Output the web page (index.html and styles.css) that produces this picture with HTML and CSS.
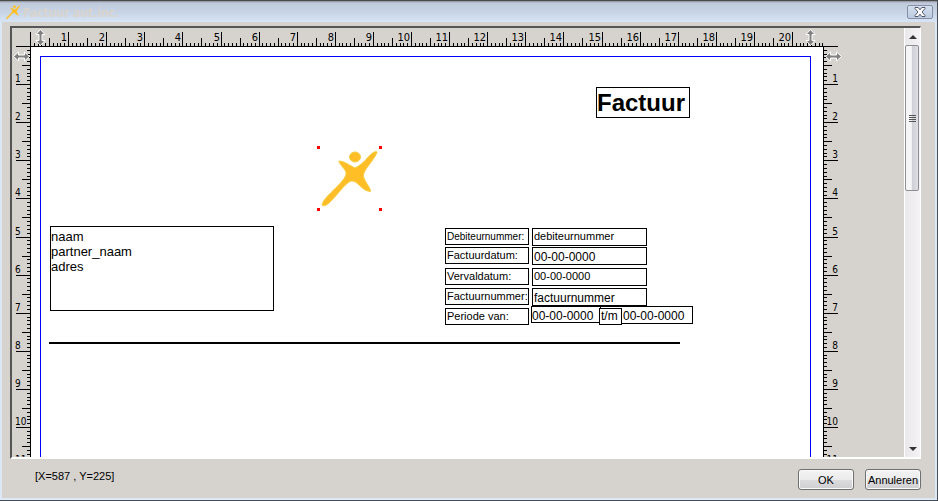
FILE: index.html
```html
<!DOCTYPE html>
<html lang="nl">
<head>
<meta charset="utf-8">
<title>Factuur aut.inc.</title>
<link rel="stylesheet" href="styles.css">
</head>
<body>
<div class="window">
  <header class="titlebar">
    <svg class="app-icon" viewBox="0 0 64 64" aria-hidden="true"><use href="#figure"/></svg>
    <h1 class="title">Factuur aut.inc.</h1>
    <button class="close" type="button" aria-label="Sluiten">
      <svg width="12" height="10" viewBox="0 0 12 10" aria-hidden="true">
        <path d="M1 .5h3.200L6 2.800 7.800.5H11v1L8 5l3 3.500v1H7.800L6 7.200 4.200 9.500H1v-1L4 5 1 1.500z" fill="#fff" stroke="#53566a"/>
      </svg>
    </button>
  </header>

  <main class="designer">
    <svg class="ruler ruler-top" id="ruler-top" aria-hidden="true"></svg>
    <svg class="ruler ruler-left" id="ruler-left" aria-hidden="true"></svg>
    <section class="sheet">
      <div class="margins"></div>
      <div class="field heading">Factuur</div>
      <div class="picture">
        <svg viewBox="0 0 64 64" aria-hidden="true">
          <g id="figure" fill="#ffbe26" stroke="#f5cf45" stroke-width="1">
            <ellipse cx="38" cy="11" rx="5.500" ry="5"/>
            <path d="M59.500 5.500C56 5.500 52 10 49 13.500C46 17 42 20 38 22C34 20 27 15 22 15C21.500 17 27 22 28.500 25C30 28 28 31 26 34C20 42 6 52 5 59C6.500 61 10 59 12 57C19 51 27 38 34 35C41 34 44 45 53.500 45.500C54 42 47 35 46.500 30C46 24 56 16 60 6.500Z"/>
          </g>
        </svg>
        <i class="handle nw"></i><i class="handle ne"></i><i class="handle sw"></i><i class="handle se"></i>
      </div>
      <div class="field address">naam<br>partner_naam<br>adres</div>

      <div class="field tight label row1">Debiteurnummer:</div>
      <div class="field small value row1">debiteurnummer</div>
      <div class="field small label row2">Factuurdatum:</div>
      <div class="field value low row2">00-00-0000</div>
      <div class="field small label row3">Vervaldatum:</div>
      <div class="field small value row3">00-00-0000</div>
      <div class="field small label row4">Factuurnummer:</div>
      <div class="field value low row4">factuurnummer</div>
      <div class="field small label row5">Periode van:</div>
      <div class="field period-end">00-00-0000</div>
      <div class="field period-start">00-00-0000</div>
      <div class="field period-sep">t/m</div>
      <div class="rule"></div>
    </section>
    <svg class="ruler ruler-right" id="ruler-right" aria-hidden="true"></svg>
    <div class="scrollbar">
      <button class="scroll-step" type="button" aria-label="Omhoog">
        <svg width="8" height="4" viewBox="0 0 8 4" aria-hidden="true"><path d="M0 4L4 0l4 4z" fill="#333"/></svg>
      </button>
      <div class="track"><div class="thumb"><i></i><i></i><i></i><i></i></div></div>
      <button class="scroll-step" type="button" aria-label="Omlaag">
        <svg width="8" height="4" viewBox="0 0 8 4" aria-hidden="true"><path d="M0 0h8L4 4z" fill="#333"/></svg>
      </button>
    </div>
  </main>

  <footer class="footer">
    <span class="position">[X=587 , Y=225]</span>
    <button class="action" type="button">OK</button>
    <button class="action" type="button">Annuleren</button>
  </footer>
</div>
<script src="rulers.js"></script>
</body>
</html>
```
FILE: styles.css
```css
* { box-sizing: border-box; }

body {
  margin: 0;
  font-family: "Liberation Sans", Arial, sans-serif;
  font-size: 12px;
  color: #000;
}

.window {
  display: flex;
  flex-direction: column;
  height: 100vh;
  background: #d6d3ce;
  border-top: 1px solid #4a4a4a;
  border-right: 1px solid #4a4f55;
  border-bottom: 1px solid #4a4f55;
  box-shadow: inset 2px 0 #dce8f6, inset -2px -2px #dce8f6;
  overflow: hidden;
}

.titlebar {
  display: flex;
  align-items: center;
  flex: none;
  height: 21px;
  padding: 0 4px 0 5px;
  background: linear-gradient(#8b9099 0, #c0cadb 2px, #c8d5e7 12px, #d7e5f6 100%);
}

.app-icon { width: 16px; height: 16px; }

.title {
  flex: 1;
  margin: 3px 0 0 2px;
  font: bold 12px "DejaVu Sans Condensed", "DejaVu Sans", sans-serif;
  color: #d8d4cd;
}

.close {
  display: flex;
  align-items: center;
  justify-content: center;
  width: 26px;
  height: 14px;
  padding: 0;
  border: 1px solid #8790a8;
  border-radius: 2px;
  background: linear-gradient(#d3dfed, #bccbe0);
}

.designer {
  flex: 1;
  min-height: 0;
  display: grid;
  grid-template-columns: 19px 792px 1fr 16px;
  grid-template-rows: 19px minmax(0, 1fr);
  margin: 4px 16px 0 10px;
  border: solid;
  border-width: 2px 1px 2px 2px;
  border-color: #555 #fff #fff #555;
  overflow: hidden;
}

.ruler {
  display: block;
  width: 100%;
  height: 100%;
  min-height: 0;
  font: 11px "DejaVu Sans Condensed", "DejaVu Sans", sans-serif;
}

.ruler-top { grid-area: 1 / 1 / 2 / 4; }
.ruler-left { grid-area: 2 / 1; font-size: 10px; }
.ruler-right { grid-area: 2 / 3; font-size: 10px; }

.sheet {
  grid-area: 2 / 2;
  position: relative;
  background: #fff;
  overflow: hidden;
}

.margins {
  height: 1080px;
  margin: 9px 12px 0 9px;
  border: 1px solid #00f;
}

/* Report items sit at free positions on the sheet. */
.field {
  position: absolute;
  border: 1px solid #000;
  padding-left: 1px;
  line-height: 15px;
  white-space: nowrap;
}

.small { font-size: 11px; }
.tight { font-size: 10px; }

.heading {
  left: 565px;
  top: 40px;
  width: 94px;
  height: 31px;
  padding-left: 0;
  font-size: 24px;
  font-weight: bold;
  line-height: 30px;
}

.address {
  left: 19px;
  top: 179px;
  width: 224px;
  height: 85px;
  padding-top: 2px;
  padding-left: 0;
  font-size: 13px;
}

.label { left: 414px; width: 84px; height: 17px; }
.value { left: 501px; width: 115px; height: 18px; }
.low { line-height: 18px; }
.row1 { top: 181px; }
.row2 { top: 200px; }
.row3 { top: 221px; }
.row4 { top: 241px; }
.row5 { top: 261px; }

.period-start { left: 500px; top: 259px; width: 70px; height: 17px; line-height: 18px; padding-left: 0; }
.period-end { left: 569px; top: 259px; width: 93px; height: 18px; line-height: 18px; padding-left: 22px; }
.period-sep { left: 568px; top: 261px; width: 23px; height: 17px; background: #fff; }

.rule {
  position: absolute;
  left: 18px;
  top: 295px;
  width: 631px;
  height: 2px;
  background: #000;
}

.picture {
  position: absolute;
  left: 286px;
  top: 99px;
  width: 65px;
  height: 65px;
}

.picture svg { display: block; width: 64px; height: 64px; }

.handle {
  position: absolute;
  width: 3px;
  height: 3px;
  background: #f00;
}

.nw { left: 0; top: 0; }
.ne { right: 0; top: 0; }
.sw { left: 0; bottom: 0; }
.se { right: 0; bottom: 0; }

.scrollbar {
  grid-area: 1 / 4 / 3 / 5;
  display: flex;
  flex-direction: column;
  border-left: 1px solid #fff;
  background: linear-gradient(90deg, #e9e8ea, #f5f2f5);
}

.scroll-step {
  display: flex;
  align-items: center;
  justify-content: center;
  flex: none;
  height: 17px;
  padding: 0;
  border: 0;
  background: none;
}

.track { flex: 1; min-height: 0; }

.thumb {
  display: flex;
  flex-direction: column;
  align-items: center;
  justify-content: center;
  gap: 1px;
  width: 14px;
  height: 37%;
  border: 1px solid #8f8f93;
  border-radius: 2px;
  background: linear-gradient(90deg, #f6f6f7 0 45%, #cfcfd8 50%, #dedee4);
}

.thumb i { width: 7px; height: 1px; background: #555; }

.footer {
  display: flex;
  align-items: center;
  flex: none;
  gap: 11px;
  height: 41px;
  padding: 0 16px 0 35px;
  font-size: 11px;
}

.position { flex: 1; padding-bottom: 7px; }

.action {
  width: 56px;
  height: 21px;
  padding: 0;
  border: 1px solid #707070;
  border-radius: 3px;
  background: linear-gradient(#f3f3f3, #ebebeb 50%, #dddddf 50%, #cfcfd2);
  box-shadow: inset 0 0 0 1px #fafafa;
  color: #000;
  font: 11px "Liberation Sans", Arial, sans-serif;
}
```
FILE: rulers.js
```js
// Draws the centimetre rulers around the sheet.
const NS = "http://www.w3.org/2000/svg";
const CM = 38.1;

function add(svg, name, attrs, text) {
  const el = document.createElementNS(NS, name);
  for (const key in attrs) el.setAttribute(key, attrs[key]);
  if (text !== undefined) el.textContent = text;
  svg.appendChild(el);
}

function bar(svg, x, y, width, height) {
  add(svg, "rect", { x, y, width, height });
}

function tickLength(mm) {
  return mm % 10 === 0 ? 14 : mm % 5 === 0 ? 8 : 3;
}

// Double-headed arrow that marks a page margin.
function marker(svg, x, y, turn) {
  add(svg, "path", {
    d: "M0-8L4.500-3H1.500V3H4.500L0 8L-4.500 3H-1.500V-3H-4.500Z",
    transform: `translate(${x} ${y}) rotate(${turn})`,
    fill: "#808080",
    stroke: "#fff"
  });
}

const across = document.getElementById("ruler-top");
bar(across, 4, 18, 822, 1);
for (let mm = 0; mm <= 208; mm++) {
  const x = 18 + Math.round(mm * CM / 10);
  const len = tickLength(mm);
  bar(across, x, 18 - len, 1, len);
  if (mm && mm % 10 === 0) add(across, "text", { x: x - 1, y: 13, "text-anchor": "end" }, mm / 10);
}
marker(across, 28.5, 9.5, 0);
marker(across, 798.5, 9.5, 0);

const left = document.getElementById("ruler-left");
const right = document.getElementById("ruler-right");
const visible = left.getBoundingClientRect().height;

function drawDown() {
  bar(left, 18, 0, 1, visible);
  bar(right, 0, 0, 1, visible);
  for (let mm = 1; mm <= 297; mm++) {
    const y = Math.round(mm * CM / 10) - 1;
    // A label starts ten pixels above its tick.
    if (y - 10 > visible) break;
    const len = tickLength(mm);
    bar(left, 18 - len, y, len, 1);
    bar(right, 1, y, len, 1);
    if (mm % 10 === 0) {
      add(left, "text", { x: 3, y: y - 2 }, mm / 10);
      add(right, "text", { x: 15, y: y - 2, "text-anchor": "end" }, mm / 10);
    }
  }
}

drawDown();
marker(left, 9.5, 9.5, 90);
marker(right, 10.5, 9.5, 90);
```
